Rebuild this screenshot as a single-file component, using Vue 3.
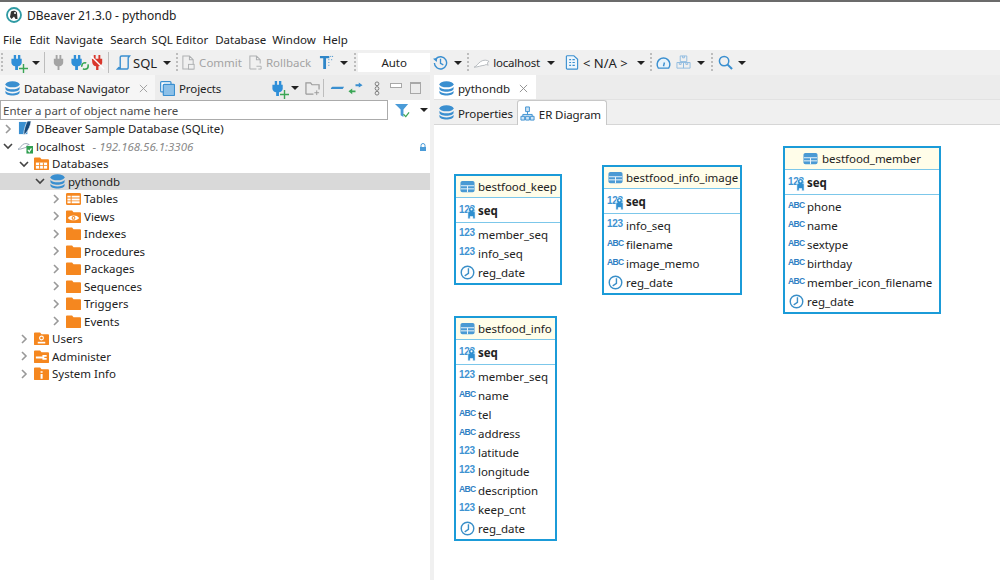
<script setup>
const tree = [
  { label: 'DBeaver Sample Database (SQLite)', d: 0, icon: 'sqlite', arrow: 'r' },
  { label: 'localhost', note: '- 192.168.56.1:3306', d: 0, icon: 'host', arrow: 'd', lock: true },
  { label: 'Databases', d: 1, icon: 'fgrid', arrow: 'd' },
  { label: 'pythondb', d: 2, icon: 'db', arrow: 'd', sel: true },
  { label: 'Tables', d: 3, icon: 'ftable', arrow: 'r' },
  { label: 'Views', d: 3, icon: 'feye', arrow: 'r' },
  { label: 'Indexes', d: 3, icon: 'folder', arrow: 'r' },
  { label: 'Procedures', d: 3, icon: 'folder', arrow: 'r' },
  { label: 'Packages', d: 3, icon: 'folder', arrow: 'r' },
  { label: 'Sequences', d: 3, icon: 'folder', arrow: 'r' },
  { label: 'Triggers', d: 3, icon: 'folder', arrow: 'r' },
  { label: 'Events', d: 3, icon: 'folder', arrow: 'r' },
  { label: 'Users', d: 1, icon: 'fuser', arrow: 'r' },
  { label: 'Administer', d: 1, icon: 'fadmin', arrow: 'r' },
  { label: 'System Info', d: 1, icon: 'finfo', arrow: 'r' }
]

const entities = [
  { name: 'bestfood_keep', x: 20, y: 49, w: 108, rows: [['n', 'member_seq'], ['n', 'info_seq'], ['t', 'reg_date']] },
  { name: 'bestfood_info_image', x: 168, y: 40, w: 140, rows: [['n', 'info_seq'], ['a', 'filename'], ['a', 'image_memo'], ['t', 'reg_date']] },
  { name: 'bestfood_member', x: 349, y: 21, w: 158, center: true, rows: [['a', 'phone'], ['a', 'name'], ['a', 'sextype'], ['a', 'birthday'], ['a', 'member_icon_filename'], ['t', 'reg_date']] },
  { name: 'bestfood_info', x: 20, y: 191, w: 103, rows: [['n', 'member_seq'], ['a', 'name'], ['a', 'tel'], ['a', 'address'], ['n', 'latitude'], ['n', 'longitude'], ['a', 'description'], ['n', 'keep_cnt'], ['t', 'reg_date']] }
]
</script>

<template>
  <div class="app">
    <svg class="defs" aria-hidden="true">
      <defs>
        <symbol id="plug" viewBox="0 0 16 16">
          <path d="M4 0h2.500v4H4zM8.500 0H11v4H8.500zM1.500 4h11v4.500a4.500 4.500 0 0 1-4 3.500v4H5.500v-4a4.500 4.500 0 0 1-4-3.500z" fill="#2f8fd8" />
        </symbol>
        <symbol id="db" viewBox="0 0 16 16">
          <ellipse cx="8" cy="3.500" rx="7.500" ry="3.200" fill="#3a8fd0" />
          <path d="M.5 6c1 2 4.500 2.800 7.500 2.800S14.500 8 15.500 6v2.500c0 1.700-3.500 3-7.500 3s-7.500-1.300-7.500-3z" fill="#3a8fd0" />
          <path d="M.5 10.500c1 2 4.500 2.800 7.500 2.800s6.500-.8 7.500-2.800V12.500c0 1.700-3.500 3-7.500 3s-7.500-1.300-7.500-3z" fill="#3a8fd0" />
        </symbol>
        <symbol id="folder" viewBox="0 0 16 16">
          <path d="M0 2.500a1 1 0 0 1 1-1h5.500l1.500 2h7a1 1 0 0 1 1 1V14a1 1 0 0 1-1 1H1a1 1 0 0 1-1-1z" fill="#f5871f" />
        </symbol>
        <symbol id="fgrid" viewBox="0 0 16 16">
          <path d="M0 2.500a1 1 0 0 1 1-1h5.500l1.500 2h7a1 1 0 0 1 1 1V14a1 1 0 0 1-1 1H1a1 1 0 0 1-1-1z" fill="#f5871f" />
          <path d="M2 7h12v6.500H2z" fill="#fff" />
          <path d="M2 9.500h12v1H2zM5.500 7h1v6.500h-1zM9.500 7h1v6.500h-1z" fill="#f5871f" />
        </symbol>
        <symbol id="ftable" viewBox="0 0 16 16">
          <rect y="2" width="16" height="13" rx="1.500" fill="#f5871f" />
          <path d="M6 5h8.500v2H6zM1.500 5H5v2H1.500zM1.500 8H5v2H1.500zM6 8h8.500v2H6zM1.500 11H5v2H1.500zM6 11h8.500v2H6z" fill="#fff" />
        </symbol>
        <symbol id="feye" viewBox="0 0 16 16">
          <path d="M0 2.500a1 1 0 0 1 1-1h5.500l1.500 2h7a1 1 0 0 1 1 1V14a1 1 0 0 1-1 1H1a1 1 0 0 1-1-1z" fill="#f5871f" />
          <path d="M2 9.500c2-3.500 10-3.500 12 0-2 3.500-10 3.500-12 0z" fill="#fff" />
          <circle cx="8" cy="9.500" r="2" fill="#f5871f" />
          <circle cx="8" cy="9.500" r=".9" fill="#fff" />
        </symbol>
        <symbol id="fuser" viewBox="0 0 16 16">
          <path d="M0 2.500a1 1 0 0 1 1-1h5.500l1.500 2h7a1 1 0 0 1 1 1V14a1 1 0 0 1-1 1H1a1 1 0 0 1-1-1z" fill="#f5871f" />
          <circle cx="8" cy="7.500" r="2" fill="none" stroke="#fff" stroke-width="1.200" />
          <path d="M4 13.300h8v-1.800H4z" fill="#fff" />
        </symbol>
        <symbol id="fadmin" viewBox="0 0 16 16">
          <path d="M0 2.500a1 1 0 0 1 1-1h5.500l1.500 2h7a1 1 0 0 1 1 1V14a1 1 0 0 1-1 1H1a1 1 0 0 1-1-1z" fill="#f5871f" />
          <path d="M2 8h7V6.500h4.500v1.800H11v1.400h2.500v1.800H9V10H2z" fill="#fff" />
        </symbol>
        <symbol id="finfo" viewBox="0 0 16 16">
          <path d="M0 2.500a1 1 0 0 1 1-1h5.500l1.500 2h7a1 1 0 0 1 1 1V14a1 1 0 0 1-1 1H1a1 1 0 0 1-1-1z" fill="#f5871f" />
          <path d="M7 5.500h2.200v1.800H7zM7 8.500h2.200V13.500H7z" fill="#fff" />
        </symbol>
        <symbol id="sqlite" viewBox="0 0 16 16">
          <path d="M1 1h9v13H1z" fill="#3a8fd0" />
          <path d="M10 0h4c-.3 4-2.500 10-6.500 14H6C6.500 9 8 4 10 0z" fill="#16487a" stroke="#fff" stroke-width=".7" />
        </symbol>
        <symbol id="host" viewBox="0 0 16 16">
          <path d="M0 11c2-1 3-3 5-5 2-1.500 5-1.500 7 0-2 0-3 1-3 3-2 0-5 2-9 2z" fill="none" stroke="#9aa8b5" stroke-width="1" />
          <rect x="9" y="7.500" width="7" height="8" fill="#2e9e4f" />
          <path d="M10.500 11.500l1.500 2 2.300-3.500" stroke="#fff" stroke-width="1.200" fill="none" />
        </symbol>
        <symbol id="table" viewBox="0 0 16 16">
          <rect x=".5" y="2" width="15" height="12" rx="2" fill="#4a9ad4" />
          <path d="M1 7.200h14M8 7.200v6.800" stroke="#e8f3fa" stroke-width="1.100" />
          <path d="M1 10.500h14" stroke="#e8f3fa" stroke-width="1.100" />
        </symbol>
        <symbol id="clock" viewBox="0 0 16 16">
          <circle cx="8" cy="8" r="6.700" fill="#fff" stroke="#3a8fc8" stroke-width="1.500" />
          <path d="M9 3.500V9L5 11.500" fill="none" stroke="#3a8fc8" stroke-width="1.500" />
        </symbol>
        <symbol id="pluswg" viewBox="0 0 9 9">
          <path d="M4.500 0v9M0 4.500h9" stroke="#3aa655" stroke-width="1.400" />
        </symbol>
      </defs>
    </svg>

    <div class="titlebar">
      <svg class="logo" viewBox="0 0 16 16">
        <circle cx="8" cy="8" r="7" fill="#fff" stroke="#2f9aa3" stroke-width="1.800" />
        <path d="M5 4.500c2-1.500 5-1 6 1l.5 6.500H9.500L8 9.500 5.500 12 4 10z" fill="#333" />
        <circle cx="9" cy="6" r="1" fill="#fff" />
      </svg>
      <span>DBeaver 21.3.0 - pythondb</span>
    </div>

    <div class="menubar">
      <span class="mf">File</span><span class="me">Edit</span><span class="mn">Navigate</span><span class="ms">Search</span><span class="mq">SQL Editor</span><span class="md">Database</span><span class="mw">Window</span><span class="mh">Help</span>
    </div>

    <div class="toolbar">
      <i class="dots grip"></i>
      <span class="ti plugadd"><svg class="ic"><use href="#plug" /></svg><svg class="plus"><use href="#pluswg" /></svg></span>
      <i class="drop a1"></i>
      <i class="vline v1"></i>
      <svg class="ic gray" viewBox="0 0 16 16"><path d="M5 0h2v4H5zM9 0h2v4H9zM3 4h10v4.500a4.500 4.500 0 0 1-4 3.500v4H7v-4a4.500 4.500 0 0 1-4-3.500z" fill="#a4a4a4" /></svg>
      <span class="ti refresh"><svg class="ic"><use href="#plug" /></svg>
        <svg class="ovr" viewBox="0 0 10 10"><circle cx="5" cy="5" r="3.200" fill="none" stroke="#3aa655" stroke-width="1.600" stroke-dasharray="7 2" /></svg>
      </span>
      <svg class="ic redp" viewBox="0 0 16 16"><path d="M4 0h2v4H4zM9 0h2v4H9zM2 4h11v4.500a4.500 4.500 0 0 1-4 3.500v4H6.500v-4a4.500 4.500 0 0 1-4-3.500z" fill="#d9372c" /><path d="M1 1l14 14" stroke="#fff" stroke-width="1.500" /></svg>
      <i class="vline v2"></i>
      <svg class="ic sql" viewBox="0 0 16 16"><path d="M4.500 14V2.500a1.500 1.500 0 0 1 1.500-1.500h8.500L13 3v10a2 2 0 0 1-2 2H1.500l1.500-1.500z" fill="none" stroke="#3a8fd0" stroke-width="1.500" /></svg>
      <span class="tt sqlt">SQL</span>
      <i class="drop a2"></i>
      <i class="dots s1"></i>
      <svg class="ic off c1" viewBox="0 0 16 16"><path d="M2 15V1h7l4 4v10zM9 1v4h4" fill="none" stroke="#aeb0b2" stroke-width="1.100" /><rect x="8" y="10" width="6" height="5" fill="#f0f0f0" stroke="#aeb0b2" /></svg>
      <span class="tt dis ct">Commit</span>
      <svg class="ic off r1" viewBox="0 0 16 16"><path d="M2 15V1h7l4 4v4M2 15h7M9 1v4h4" fill="none" stroke="#aeb0b2" stroke-width="1.100" /><path d="M9 12h5v3h-3" fill="none" stroke="#aeb0b2" /></svg>
      <span class="tt dis rt">Rollback</span>
      <svg class="ic tf" viewBox="0 0 16 16"><path d="M1 1h10v2.500H7.500V15h-3V3.500H1z" fill="#2f86c8" /><path d="M12 1.500h3M10 5h1M13 5h2M10 8h1M10 11h1" stroke="#2f86c8" stroke-dasharray="1 1" /></svg>
      <i class="drop a3"></i>
      <i class="dots s2"></i>
      <div class="auto">Auto</div>
      <svg class="ic clk" viewBox="0 0 16 16"><path d="M3.200 4A6.500 6.500 0 1 1 1.500 8.500" fill="none" stroke="#3a8fd0" stroke-width="1.500" /><path d="M0 4l4.500 -1L4 7.500z" fill="#3a8fd0" /><path d="M8 4v5l3 1.500" fill="none" stroke="#3a8fd0" stroke-width="1.400" /></svg>
      <i class="drop a4"></i>
      <i class="dots s3"></i>
      <svg class="ic conn" viewBox="0 0 18 16"><path d="M0 13c3-1 4-4 7-6 3-2 7-2 9 0-2 0-2 2-1 4-1-1-3-1-4 0-3 0-7 2-11 2z" fill="#fff" stroke="#b4b9bd" /></svg>
      <span class="tt lh">localhost</span>
      <i class="drop a5"></i>
      <svg class="ic docx" viewBox="0 0 14 16"><path d="M1 1.500A1 1 0 0 1 2 .8h7l4 3.700V14a1 1 0 0 1-1 1H2a1 1 0 0 1-1-1z" fill="#eef6fc" stroke="#3a8fd0" stroke-width="1.200" /><path d="M4 5h2M7.500 5H10M4 8h2M7.500 8H10M4 11h2M7.500 11H10" stroke="#3a8fd0" stroke-width="1.300" /></svg>
      <span class="tt na">&lt; N/A &gt;</span>
      <i class="drop a6"></i>
      <i class="dots s4"></i>
      <svg class="ic gauge" viewBox="0 0 16 16"><path d="M2.500 14A6.800 6.800 0 1 1 13.500 14z" fill="#e8f3fb" stroke="#3a8fd0" stroke-width="1.500" /><path d="M8 12l1-4" stroke="#3a8fd0" stroke-width="1.500" /></svg>
      <svg class="ic boxes" viewBox="0 0 16 16"><path d="M4.500 1h7v6h-7zM1 8h7v6H1zM8 8h7v6H8zM7 1v2h2V1M3.500 8v2h2V8M10.500 8v2h2V8" fill="none" stroke="#8fbbe0" /></svg>
      <i class="drop a7"></i>
      <i class="dots s5"></i>
      <svg class="ic mag" viewBox="0 0 16 16"><circle cx="6.500" cy="6.500" r="5" fill="none" stroke="#3a8fd0" stroke-width="1.600" /><path d="M10 10l5 5" stroke="#3a8fd0" stroke-width="2.200" /></svg>
      <i class="drop a8"></i>
    </div>

    <div class="main">
      <section class="left">
        <div class="ltabs">
          <div class="ltab on">
            <svg class="ic"><use href="#db" /></svg>
            <span>Database Navigator</span>
            <svg class="x" viewBox="0 0 10 10"><path d="M1 1l8 8M9 1l-8 8" stroke="#9a9a9a" stroke-width="1" /></svg>
          </div>
          <div class="ltab pr">
            <svg class="ic" viewBox="0 0 16 16"><rect x=".7" y=".7" width="11" height="11" rx="1" fill="#fff" stroke="#3a8fd0" stroke-width="1.300" /><rect x="3.500" y="3.500" width="12" height="12" rx="1" fill="#8cc0e8" stroke="#3a8fd0" stroke-width="1.300" /></svg>
            <span>Projects</span>
          </div>
          <div class="ltools">
            <span class="ti t1"><svg class="ic"><use href="#plug" /></svg><svg class="plus"><use href="#pluswg" /></svg></span>
            <i class="drop t2"></i>
            <svg class="ic t3" viewBox="0 0 16 16"><path d="M1 14V2h5l1.500 2H15v5M1 14h8" fill="none" stroke="#9a9a9a" stroke-width="1.300" /><path d="M12.500 10v5M10 12.500h5" stroke="#9a9a9a" /></svg>
            <i class="vline v3"></i>
            <svg class="ic t4" viewBox="0 0 16 16"><path d="M1 7.500L2.500 6H15l-1.500 2.500H1z" fill="#3a8fd0" /></svg>
            <svg class="ic t5" viewBox="0 0 16 16"><path d="M8 3.500h3.500V1.500L15.500 4.500 11.500 7V5.500H8z" fill="#3a8fd0" /><path d="M8 10h-3.500V8L.5 11l4 3v-2H8z" fill="#3aa655" /></svg>
            <svg class="ic t6" viewBox="0 0 8 16"><circle cx="4" cy="3" r="2" fill="none" stroke="#7a7a7a" /><circle cx="4" cy="8" r="2" fill="none" stroke="#7a7a7a" /><circle cx="4" cy="13" r="2" fill="none" stroke="#7a7a7a" /></svg>
            <i class="minb"></i>
            <i class="maxb"></i>
          </div>
        </div>
        <div class="searchbar">
          <div class="search">Enter a part of object name here</div>
          <span class="ti fil"><svg class="ic" viewBox="0 0 16 16"><path d="M0 1h14L9 7v8L6 13V7z" fill="#4a9bd8" /><path d="M9 12l2.500 2.500L15 10" fill="none" stroke="#3aa655" stroke-width="1.300" /></svg></span>
          <i class="drop f2"></i>
        </div>
        <div class="tree">
          <div v-for="t in tree" :key="t.label" class="row" :class="['lv' + t.d, { sel: t.sel }]">
            <svg class="arr" viewBox="0 0 10 10">
              <path v-if="t.arrow === 'r'" d="M3 1l4 4-4 4" fill="none" stroke="#999" stroke-width="1.600" />
              <path v-else d="M1 3l4 4 4-4" fill="none" stroke="#444" stroke-width="1.600" />
            </svg>
            <svg class="ric"><use :href="'#' + t.icon" /></svg>
            <span class="lab">{{ t.label }}</span>
            <span v-if="t.note" class="note">{{ t.note }}</span>
            <svg v-if="t.lock" class="lock" viewBox="0 0 10 10"><path d="M3 5V3.500a2 2 0 0 1 4 0V5" fill="none" stroke="#4a9bd8" /><rect x="2" y="5" width="6" height="4" fill="#4a9bd8" /></svg>
          </div>
        </div>
      </section>

      <div class="sash"></div>

      <section class="right">
        <div class="etabs">
          <div class="etab">
            <svg class="ic"><use href="#db" /></svg>
            <span>pythondb</span>
            <svg class="x" viewBox="0 0 10 10"><path d="M1 1l8 8M9 1l-8 8" stroke="#8a8a8a" stroke-width="1" /></svg>
          </div>
        </div>
        <div class="stabs">
          <div class="stab">
            <svg class="ic"><use href="#db" /></svg>
            <span>Properties</span>
          </div>
          <div class="stab on">
            <svg class="ic" viewBox="0 0 16 16"><path d="M6 1h4v5H6zM1 11h4v4H1zM6 11h4v4H6zM11 11h4v4h-4zM8 6v3M3 11V9h10v2" fill="#cfe4f5" stroke="#3a8fd0" /></svg>
            <span>ER Diagram</span>
          </div>
        </div>
        <div class="canvas">
          <div
            v-for="e in entities"
            :key="e.name"
            class="ent"
            :style="{ left: e.x + 'px', top: e.y + 'px', width: e.w + 'px' }"
          >
            <div class="ehead" :class="{ center: e.center }">
              <svg class="ic"><use href="#table" /></svg>
              <span>{{ e.name }}</span>
            </div>
            <div class="ekey">
              <span class="tb num">123</span>
              <svg class="key" viewBox="0 0 10 14"><path d="M5 .5a3.300 3.300 0 0 1 2.500 5.500H9v8H6.500v-2.500h-3V14H1V6h1.500A3.300 3.300 0 0 1 5 .5z" fill="#2f8fd0" stroke="#fff" stroke-width=".6" /><circle cx="5" cy="3.500" r="1.200" fill="#fff" /></svg>
              <b>seq</b>
            </div>
            <div class="erows">
              <div v-for="r in e.rows" :key="r[1]" class="erow">
                <span v-if="r[0] === 'n'" class="tb num">123</span>
                <span v-else-if="r[0] === 'a'" class="tb abc">ABC</span>
                <svg v-else class="tb clock"><use href="#clock" /></svg>
                <span>{{ r[1] }}</span>
              </div>
            </div>
          </div>
        </div>
      </section>
    </div>
  </div>
</template>

<style>
html, body { margin: 0; background: #fff; }
</style>

<style scoped>
.app {
  width: 1000px;
  height: 580px;
  overflow: hidden;
  display: flex;
  flex-direction: column;
  font-family: "Noto Sans", "Open Sans", sans-serif;
  font-size: 11.500px;
  color: #222;
  background: #fff;
  position: relative;
}
.defs { position: absolute; width: 0; height: 0; }
.ic { width: 15px; height: 15px; flex: none; display: block; }

.titlebar {
  height: 26px;
  border-top: 2px solid #6b6b6b;
  display: flex;
  align-items: center;
  padding-left: 6px;
  gap: 5px;
  font-size: 12px;
}
.logo { width: 16px; height: 16px; }
.menubar {
  height: 22px;
  display: flex;
  align-items: center;
  padding-left: 3px;
}
.me { margin-left: 8px; }
.mn { margin-left: 5px; }
.ms { margin-left: 7px; }
.mq { margin-left: 5px; }
.md { margin-left: 7px; }
.mw { margin-left: 6px; }
.mh { margin-left: 7px; }

.toolbar {
  height: 25px;
  background: #f0f0f0;
  display: flex;
  align-items: center;
  position: relative;
}
.ti { position: relative; display: block; flex: none; }
.plus { position: absolute; right: -3px; bottom: -3px; width: 9px; height: 9px; }
.ovr { position: absolute; right: -5px; bottom: -1px; width: 10px; height: 10px; }
.drop {
  display: block;
  flex: none;
  width: 0;
  height: 0;
  border-left: 4px solid transparent;
  border-right: 4px solid transparent;
  border-top: 4.500px solid #222;
}
.vline { display: block; flex: none; width: 1px; height: 21px; background: #bdbdbd; }
.dots {
  display: block;
  flex: none;
  width: 2px;
  height: 20px;
  background: repeating-linear-gradient(#bdbdbd 0 2px, transparent 2px 4px);
}
.tt { flex: none; line-height: 16px; }
.dis { color: #a3a3a3; }
.grip { margin-left: 1px; }
.plugadd { margin-left: 7px; }
.a1 { margin-left: 7px; }
.v1 { margin-left: 4px; }
.gray { margin-left: 6px; }
.refresh { margin-left: 4px; }
.redp { margin-left: 5px; }
.v2 { margin-left: 3px; }
.sql { margin-left: 7px; }
.sqlt { margin-left: 2px; font-size: 13px; }
.a2 { margin-left: 6px; }
.s1 { margin-left: 5px; }
.c1 { margin-left: 3px; }
.ct { margin-left: 3px; }
.r1 { margin-left: 6px; }
.rt { margin-left: 3px; }
.tf { margin-left: 8px; }
.a3 { margin-left: 6px; }
.s2 { margin-left: 6px; }
.auto {
  margin-left: 2px;
  width: 72px;
  height: 19px;
  background: #fff;
  text-align: center;
  line-height: 19px;
  flex: none;
}
.clk { margin-left: 3px; }
.a4 { margin-left: 6px; }
.s3 { margin-left: 5px; }
.conn { margin-left: 5px; width: 17px; }
.lh { margin-left: 2px; letter-spacing: -.2px; }
.a5 { margin-left: 7px; }
.docx { margin-left: 10px; width: 14px; }
.na { margin-left: 4px; font-size: 13px; }
.a6 { margin-left: 9px; }
.s4 { margin-left: 5px; }
.gauge { margin-left: 4px; }
.boxes { margin-left: 5px; }
.a7 { margin-left: 6px; }
.s5 { margin-left: 6px; }
.mag { margin-left: 5px; }
.a8 { margin-left: 5px; }

.main { flex: 1; display: flex; min-height: 0; }
.left { width: 430px; flex: none; display: flex; flex-direction: column; }
.sash { width: 4px; flex: none; background: #f0f0f0; }
.right { flex: 1; display: flex; flex-direction: column; min-width: 0; }

.ltabs { height: 25px; display: flex; background: #ececec; flex: none; }
.ltab { display: flex; align-items: center; height: 25px; box-sizing: border-box; padding-top: 2px; letter-spacing: -.1px; }
.ltab.on { width: 155px; background: #f6f6f6; padding-left: 5px; }
.ltab.on span { margin-left: 4px; }
.ltab .x { width: 9px; height: 9px; margin-left: 9px; }
.ltab.pr { padding-left: 5px; }
.ltab.pr span { margin-left: 4px; }
.ltools { display: flex; align-items: center; margin-left: 50px; padding-top: 1px; }
.t2 { margin-left: 5px; }
.t3 { margin-left: 6px; }
.v3 { margin-left: 3px; height: 18px; }
.t4 { margin-left: 6px; }
.t5 { margin-left: 3px; }
.t6 { margin-left: 10px; width: 8px; }
.minb { display: block; width: 10px; height: 3px; border: 1px solid #a8a8a8; background: #fff; margin-left: 9px; margin-top: -6px; box-sizing: content-box; }
.maxb { display: block; width: 9px; height: 9px; border: 1px solid #a8a8a8; border-top-width: 2px; margin-left: 8px; }

.searchbar { height: 20px; display: flex; align-items: center; flex: none; }
.search {
  width: 388px;
  height: 20px;
  box-sizing: border-box;
  border: 1px solid #ababab;
  padding-left: 2px;
  line-height: 19px;
  color: #4c4c4c;
  flex: none;
}
.fil { margin-left: 7px; }
.f2 { margin-left: 10px; }

.tree { flex: 1; }
.row {
  height: 17.500px;
  display: flex;
  align-items: center;
  position: relative;
}
.row.sel { background: #d9d9d9; }
.lv0 { padding-left: 3px; }
.lv1 { padding-left: 19px; }
.lv2 { padding-left: 35px; }
.lv3 { padding-left: 51px; }
.arr { width: 10px; height: 10px; flex: none; }
.ric { width: 15px; height: 15px; margin-left: 5px; margin-right: 3px; flex: none; }
.note { margin-left: 8px; font-style: italic; color: #8a8a8a; }
.lock { position: absolute; left: 418px; top: 4px; width: 10px; height: 10px; }

.etabs { height: 24px; background: #ececec; display: flex; flex: none; }
.etab { width: 102px; background: #fff; display: flex; align-items: center; padding: 2px 0 0 5px; box-sizing: border-box; }
.etab span { margin-left: 4px; }
.etab .x { width: 9px; height: 9px; margin-left: 9px; }
.stabs {
  height: 26px;
  background: #f0f0f0;
  display: flex;
  align-items: flex-end;
  flex: none;
  box-sizing: border-box;
  border-top: 1px solid #e2e2e2;
  border-bottom: 1px solid #d6d6d6;
  letter-spacing: -.1px;
}
.stab { height: 24px; display: flex; align-items: center; padding-left: 5px; white-space: nowrap; }
.stab span { margin-left: 4px; position: relative; top: 1px; }
.stab.on {
  background: #fff;
  margin-left: 4px;
  width: 90px;
  box-sizing: border-box;
  padding-left: 2px;
  border: 1px solid #c8c8c8;
  border-bottom: none;
  border-radius: 3px 3px 0 0;
  margin-bottom: -1px;
  height: 25px;
}
.canvas { flex: 1; position: relative; background: #fff; }

.ent {
  position: absolute;
  box-sizing: border-box;
  border: 2px solid #1b9bd8;
  background: #fff;
  letter-spacing: -.05px;
}
.ehead {
  height: 21px;
  background: #fffde9;
  border-bottom: 1px solid #7cc7ea;
  display: flex;
  align-items: center;
  padding-left: 4px;
  gap: 3px;
  white-space: nowrap;
}
.ehead.center { justify-content: center; padding-left: 0; gap: 4px; }
.ekey {
  height: 25px;
  box-sizing: border-box;
  padding-top: 1px;
  border-bottom: 1px solid #7cc7ea;
  display: flex;
  align-items: center;
  position: relative;
  padding-left: 3px;
}
.ekey b { font-weight: 700; }
.key { position: absolute; left: 11px; top: 8px; width: 9px; height: 13px; }
.erows { padding: 1.500px 0 1.500px; }
.erow { height: 19px; display: flex; align-items: center; padding-left: 3px; white-space: nowrap; }
.tb { width: 19px; flex: none; font: 700 10px/12px "Liberation Sans", sans-serif; letter-spacing: -.3px; color: #3f93d2; position: relative; top: -1px; }
.abc { font-size: 8.500px; letter-spacing: -.6px; color: #2f7fc4; }
.clock { width: 15px; height: 15px; margin-left: 1px; margin-right: 3px; top: 0; }
</style>
